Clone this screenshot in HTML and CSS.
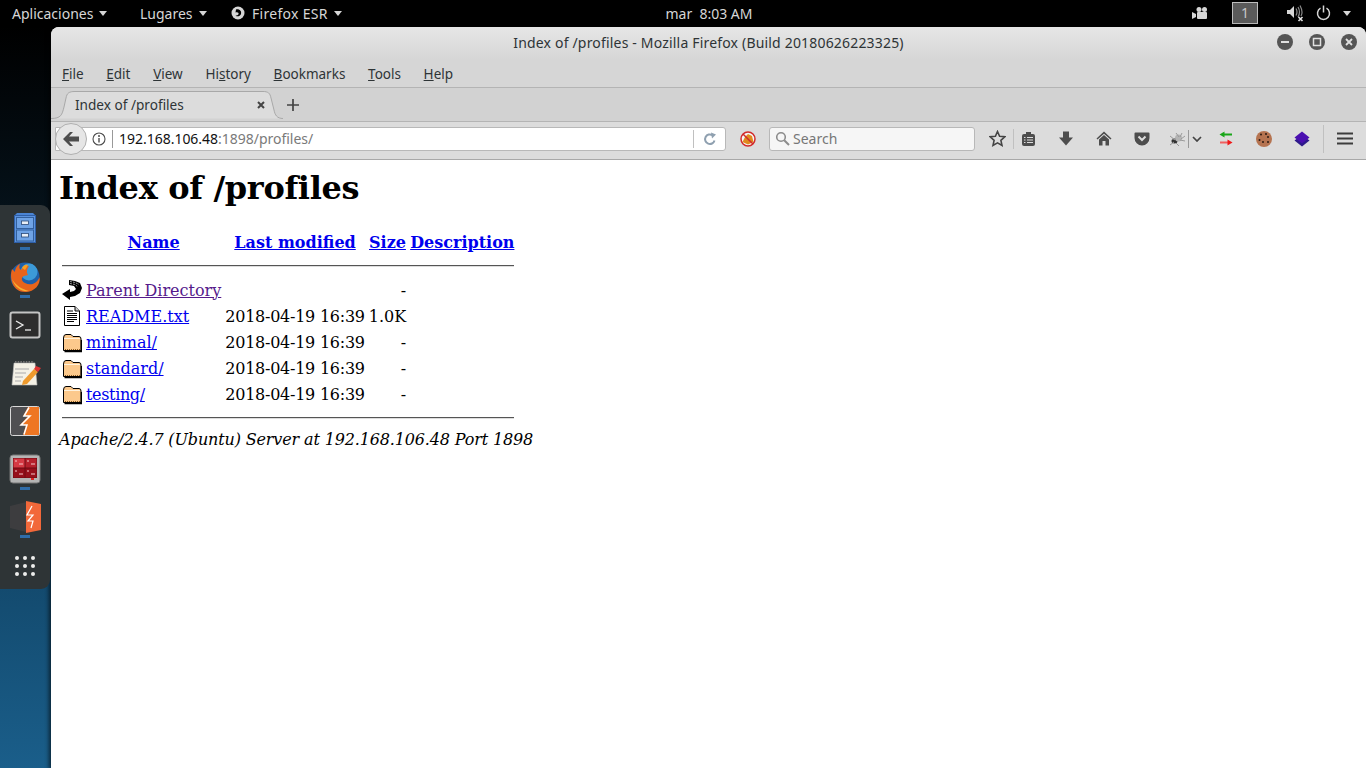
FILE: index.html
```html
<!DOCTYPE html>
<html lang="en">
<head>
    <meta charset="UTF-8">
    <title>Index of /profiles - Mozilla Firefox</title>
    <link rel="stylesheet" href="styles.css">
</head>
<body>
    <div class="topbar">
        <div class="topbar-left">
            <span class="top-item top-apps">Aplicaciones<i class="arrow"></i></span>
            <span class="top-item top-places">Lugares<i class="arrow"></i></span>
            <span class="top-item">
                <svg class="top-ff" width="14" height="14" viewBox="0 0 14 14"><circle cx="7" cy="7" r="6.5" fill="#d6d6d6"/><path d="M5 3.5 C8 2.5 11 5 10 8 C9 10.5 6 11 4.5 9.5 C6.5 10 8 8.5 7.5 7 C7 6 5.5 6 4.5 6.5 Z" fill="#000"/></svg>
                <span class="top-ff-name">Firefox ESR</span><i class="arrow"></i>
            </span>
        </div>
        <div class="clock">mar&nbsp; 8:03 AM</div>
        <div class="topbar-right">
            <svg class="top-cam" width="16" height="14" viewBox="0 0 16 14"><circle cx="7" cy="3.5" r="2.5" fill="#d6d6d6"/><circle cx="12.5" cy="3.5" r="2.5" fill="#d6d6d6"/><rect x="5" y="6" width="10" height="7" rx="1" fill="#d6d6d6"/><path d="M0 6 L4 8 V11 L0 13Z" fill="#d6d6d6"/></svg>
            <span class="workspace">1</span>
            <svg class="top-vol" width="17" height="18" viewBox="0 0 17 18"><path d="M0 6 H3 L7 2 V14 L3 10 H0Z" fill="#d6d6d6"/><path d="M9 4.5 Q11 8 9 11.5 M11 3 Q14 8 11 13 M13 1.5 Q16.5 8 14 12" fill="none" stroke="#8a8a8a" stroke-width="1.2"/><path d="M11.5 13 L15.5 17 M15.5 13 L11.5 17" stroke="#e4e4e4" stroke-width="1.6"/></svg>
            <svg class="top-power" width="15" height="16" viewBox="0 0 15 16"><path d="M4.5 3.2 A6 6 0 1 0 10.5 3.2" fill="none" stroke="#d6d6d6" stroke-width="1.5"/><path d="M7.5 0.5 V7.5" stroke="#d6d6d6" stroke-width="1.5"/></svg>
            <i class="arrow"></i>
        </div>
    </div>

    <div class="desktop">
        <div class="dock">
            <div class="dock-item">
                <svg width="32" height="32" viewBox="0 0 32 32"><path d="M6 2 L8 0 H24 L26 2 V30 H6Z" fill="#4a84d4"/><rect x="5.500" y="2.500" width="21" height="27" fill="#5b93de" stroke="#2f5fa8"/><rect x="7.500" y="4.500" width="17" height="11" fill="#6fa3e6" stroke="#33609e"/><rect x="7.500" y="17" width="17" height="11" fill="#6fa3e6" stroke="#33609e"/><rect x="12.500" y="8" width="7" height="3.500" fill="#e8eef6" stroke="#2b4a78" stroke-width=".8"/><rect x="12.500" y="20.500" width="7" height="3.500" fill="#e8eef6" stroke="#2b4a78" stroke-width=".8"/></svg>
                <i class="dock-dot"></i>
            </div>
            <div class="dock-item">
                <svg width="32" height="32" viewBox="0 0 32 32"><circle cx="16" cy="16" r="14.500" fill="#1f5fa8"/><circle cx="20" cy="11" r="8.500" fill="#3c9ad8"/><path d="M3 8 C0 18 4 31 16 31 C26 31 32 23 30.500 16 C28 23 21 25 16 22 C12 20 12 16 15 15 L19 14 C17 11 18 8 20 5 C16 5 13 7 12 9 C10 8 10 6 11 3 C8 4 6 8 6 11 C5 10 4 9 3 8Z" fill="#e8641b"/><path d="M3 18 C6 27 13 31 20 30 C13 28 7 25 3 18Z" fill="#f9b233"/><path d="M13 7 C14 5 16 3 19 4 L16 9Z" fill="#f9a01e"/></svg>
                <i class="dock-dot"></i>
            </div>
            <div class="dock-item">
                <svg width="32" height="32" viewBox="0 0 32 32"><rect x="1.500" y="3.500" width="29" height="25" rx="2" fill="#2a2a2a" stroke="#c4c4c4" stroke-width="2"/><rect x="3" y="5" width="26" height="22" fill="#2d2d2d"/><path d="M7 12 L14 16 L7 20" fill="none" stroke="#eee" stroke-width="1.300"/><path d="M16 21 H22" stroke="#eee" stroke-width="1.300"/></svg>
            </div>
            <div class="dock-item">
                <svg width="32" height="32" viewBox="0 0 32 32"><path d="M5 6 H26 L28 28 H3Z" fill="#f4f1e6" stroke="#bbb" stroke-width=".6"/><path d="M6 5 H25" stroke="#777" stroke-width="2" stroke-dasharray="1.500 1.200"/><path d="M6 12 H20 M6 16 H17 M6 20 H14 M6 24 H12" stroke="#aaa" stroke-width="1.200"/><path d="M14 24 L25 12 L29 15 L18 27 L13 28Z" fill="#ee9a2d"/><path d="M25 12 L27 9 L32 11 L29 15Z" fill="#d33"/></svg>
            </div>
            <div class="dock-item">
                <svg width="32" height="32" viewBox="0 0 32 32"><rect x="1.500" y="1.500" width="29" height="29" rx="2" fill="#4f4f52" stroke="#d8d8d8"/><path d="M17 2 H30 V30 H14 L17 20 H11 L19 11 H14 L19 2Z" fill="#ee7623"/><path d="M20 2.500 L15 11 H21 L12 20 H18 L15 29.500" fill="none" stroke="#fff" stroke-width="1.500"/></svg>
            </div>
            <div class="dock-item">
                <svg width="32" height="32" viewBox="0 0 32 32"><rect x="1" y="2" width="30" height="28" rx="3" fill="#b4b4b4" stroke="#777"/><rect x="4" y="5" width="24" height="20" fill="#6e0a12"/><rect x="4.500" y="5.500" width="11" height="9" fill="#d63a45"/><rect x="16.500" y="5.500" width="11" height="9" fill="#b5202c"/><rect x="4.500" y="15.500" width="11" height="9" fill="#960f1b"/><rect x="16.500" y="15.500" width="11" height="9" fill="#960f1b"/><path d="M6 8 H8 M10 11 H14 M18 8 H20 M22 11 H26 M6 18 H8 M10 21 H14 M18 18 H20 M22 21 H26" stroke="#f3c9cc"/><rect x="22" y="25" width="3" height="2" fill="#d22"/></svg>
                <i class="dock-dot"></i>
            </div>
            <div class="dock-item">
                <svg width="32" height="32" viewBox="0 0 32 32"><path d="M1 5 L17 1 V31 L1 27Z" fill="#3d3d3f"/><path d="M17 0 L32 3 V29 L17 32Z" fill="#f2683a"/><path d="M23 5 L18 14 H24 L19 20 H24 L22 27" fill="none" stroke="#fff" stroke-width="1.200"/></svg>
                <i class="dock-dot"></i>
            </div>
            <div class="dock-item">
                <svg width="32" height="32" viewBox="0 0 32 32"><g fill="#eeeeec"><circle cx="8" cy="9" r="2"/><circle cx="16" cy="9" r="2"/><circle cx="24" cy="9" r="2"/><circle cx="8" cy="17" r="2"/><circle cx="16" cy="17" r="2"/><circle cx="24" cy="17" r="2"/><circle cx="8" cy="25" r="2"/><circle cx="16" cy="25" r="2"/><circle cx="24" cy="25" r="2"/></g></svg>
            </div>
        </div>

        <div class="window">
            <div class="titlebar">
                <span class="title">Index of /profiles - Mozilla Firefox (Build 20180626223325)</span>
                <div class="win-buttons">
                    <span class="win-btn"><svg width="10" height="10" viewBox="0 0 10 10"><path d="M1 5 H9" stroke="#e0e0e0" stroke-width="2"/></svg></span>
                    <span class="win-btn"><svg width="10" height="10" viewBox="0 0 10 10"><rect x="1.500" y="1.500" width="7" height="7" fill="none" stroke="#e0e0e0" stroke-width="1.500"/></svg></span>
                    <span class="win-btn"><svg width="10" height="10" viewBox="0 0 10 10"><path d="M2 2 L8 8 M8 2 L2 8" stroke="#e0e0e0" stroke-width="1.800"/></svg></span>
                </div>
            </div>
            <div class="menubar">
                <span><u>F</u>ile</span>
                <span><u>E</u>dit</span>
                <span><u>V</u>iew</span>
                <span>Hi<u>s</u>tory</span>
                <span><u>B</u>ookmarks</span>
                <span><u>T</u>ools</span>
                <span><u>H</u>elp</span>
            </div>
            <div class="tabstrip">
                <div class="tab">
                    <svg class="tab-shape" width="232" height="31" viewBox="0 0 232 31"><path d="M0 29.500 C10 29.500 11 26 13 18 L15 9 C16 4 18 2.500 24 2.500 H212 C217 2.500 219 4 220 9 L223 21 C224 26 226 29.500 232 29.500" fill="#dcdcdc" stroke="#a8a8a8"/></svg>
                    <span class="tab-title">Index of /profiles</span>
                    <svg class="tab-close" width="8" height="8" viewBox="0 0 8 8"><path d="M1 1 L7 7 M7 1 L1 7" stroke="#444" stroke-width="2"/></svg>
                </div>
                <svg class="tab-new" width="14" height="14" viewBox="0 0 14 14"><path d="M7 1 V13 M1 7 H13" stroke="#444" stroke-width="1.700"/></svg>
            </div>
            <div class="navbar">
                <div class="urlbar">
                    <span class="back"><svg width="18" height="16" viewBox="0 0 18 16"><path d="M1 8 L8 1 H11 L7 5.500 H17 V10.500 H7 L11 15 H8Z" fill="#4d4d4d"/></svg></span>
                    <svg class="info" width="14" height="14" viewBox="0 0 14 14"><circle cx="7" cy="7" r="6" fill="none" stroke="#4d4d4d" stroke-width="1.100"/><path d="M7 6 V10.500" stroke="#4d4d4d" stroke-width="1.400"/><circle cx="7" cy="4" r="1" fill="#4d4d4d"/></svg>
                    <span class="url"><b>192.168.106.48</b>:1898/profiles/</span>
                    <span class="reload"><svg width="14" height="14" viewBox="0 0 14 14"><path d="M11.500 8.500 A4.800 4.800 0 1 1 9.500 3.200" fill="none" stroke="#8fa0b0" stroke-width="2"/><path d="M8 0.500 L13 2.500 L9 6.500Z" fill="#8fa0b0"/></svg></span>
                </div>
                <svg class="blocker" width="16" height="16" viewBox="0 0 16 16"><circle cx="8" cy="8" r="7" fill="#f6f6f6" stroke="#d22b2b" stroke-width="1.500"/><path d="M2.500 11 L5 6 L8 3 L12 5 L13.500 11 L8 13.500Z" fill="#e08a1e"/><path d="M3 3 L13 13" stroke="#d22b2b" stroke-width="1.500"/></svg>
                <div class="searchbar">
                    <svg width="15" height="15" viewBox="0 0 15 15"><circle cx="6" cy="6" r="4.300" fill="none" stroke="#8c8c8c" stroke-width="1.600"/><path d="M9.200 9.200 L14 14" stroke="#8c8c8c" stroke-width="2"/></svg>
                    <span>Search</span>
                </div>
                <div class="tools">
                    <span class="tool tool-star"><svg width="17" height="17" viewBox="0 0 17 17"><path d="M8.500 1.500 L10.600 6.300 L15.800 6.800 L11.900 10.300 L13 15.400 L8.500 12.800 L4 15.400 L5.100 10.300 L1.200 6.800 L6.400 6.300Z" fill="none" stroke="#444" stroke-width="1.600"/></svg></span>
                    <i class="sep"></i>
                    <span class="tool"><svg width="15" height="16" viewBox="0 0 15 16"><rect x="1" y="3" width="13" height="12" rx="2" fill="#4d4d4d"/><rect x="5" y="1" width="5" height="3" fill="#4d4d4d"/><path d="M3 6.500 H4.500 M6 6.500 H12 M3 9 H4.500 M6 9 H12 M3 11.500 H4.500 M6 11.500 H12" stroke="#dcdcdc"/></svg></span>
                    <span class="tool"><svg width="16" height="15" viewBox="0 0 16 15"><path d="M5 0.500 H11 V6.500 H15 L8 14.500 L1 6.500 H5Z" fill="#4d4d4d"/></svg></span>
                    <span class="tool"><svg width="16" height="15" viewBox="0 0 16 15"><path d="M8 0.500 L15.500 7.500 L14.500 8.500 L8 2.800 L1.500 8.500 L0.500 7.500Z" fill="#4d4d4d"/><path d="M3 8.500 L8 4 L13 8.500 V14.500 H9.500 V10 H6.500 V14.500 H3Z" fill="#4d4d4d"/></svg></span>
                    <span class="tool"><svg width="16" height="14" viewBox="0 0 16 14"><path d="M1.500 0.500 H14.500 A1 1 0 0 1 15.500 1.500 V6 A7.500 7.500 0 0 1 0.500 6 V1.500 A1 1 0 0 1 1.500 0.500Z" fill="#4d4d4d"/><path d="M4.500 4.500 L8 8 L11.500 4.500" fill="none" stroke="#dcdcdc" stroke-width="2"/></svg></span>
                    <span class="tool-split">
                        <svg width="16" height="14" viewBox="0 0 16 14"><ellipse cx="5.500" cy="9" rx="3" ry="2.500" fill="#333"/><circle cx="9.500" cy="6" r="3.500" fill="#b4b4b4"/><path d="M1 4 L6 8 M1 13 L5 10 M7 11 L10 14 M7 1 L10 5 M13 1 L11 5 M16 4 L12 7 M16 9 L11 8 M3 7 H7" stroke="#999"/></svg>
                        <i class="sep-thin"></i>
                        <svg width="10" height="6" viewBox="0 0 10 6"><path d="M1 1 L5 5 L9 1" fill="none" stroke="#444" stroke-width="1.700"/></svg>
                    </span>
                    <span class="tool"><svg width="14" height="15" viewBox="0 0 14 15"><path d="M13 3.500 H5" stroke="#19a619" stroke-width="2"/><path d="M0.500 3.500 L5.500 0.500 V6.500Z" fill="#19a619"/><path d="M1 11.500 H9" stroke="#f06060" stroke-width="2"/><path d="M13.500 11.500 L8.500 8.500 V14.500Z" fill="#f01818"/></svg></span>
                    <span class="tool"><svg width="16" height="16" viewBox="0 0 16 16"><circle cx="8" cy="8" r="8" fill="#b57350"/><g fill="#2b1a12"><circle cx="5" cy="3.500" r="1"/><circle cx="10" cy="3" r="1"/><circle cx="12" cy="6" r="1"/><circle cx="3.500" cy="9" r="1"/><circle cx="7" cy="11" r="1"/><circle cx="12" cy="11" r="1"/></g></svg></span>
                    <span class="tool"><svg width="16" height="16" viewBox="0 0 16 16"><path d="M8 4 L15.500 9.500 L8 15.500 L0.500 9.500Z" fill="#2e1a8a"/><path d="M8 0.500 L15.500 6.500 L8 12.500 L0.500 6.500Z" fill="#4a0fb0"/></svg></span>
                    <i class="sep sep-last"></i>
                    <span class="tool tool-menu"><svg width="16" height="13" viewBox="0 0 16 13"><path d="M0 1.500 H16 M0 6.500 H16 M0 11.500 H16" stroke="#3c3c3c" stroke-width="2.200"/></svg></span>
                </div>
            </div>

            <div class="page">
                <h1>Index of /profiles</h1>
                <table class="listing">
                    <tr class="head">
                        <th></th>
                        <th><a href="#">Name</a></th>
                        <th><a href="#">Last modified</a></th>
                        <th><a href="#">Size</a></th>
                        <th><a href="#">Description</a></th>
                    </tr>
                    <tr><th colspan="5"><hr></th></tr>
                    <tr>
                        <td><svg class="fi" width="20" height="22" viewBox="0 0 20 22"><path d="M7 1 L13 2 L18 4 L20 9 L18 14 L13 17 L8 18 V21 L0 15 L8 10 V13 L12 12 L14 10 L12 7 L7 6Z" fill="#000"/><path d="M8 2.500 L13 3.500 L17 5.500 M8 4.500 L13 5.500 L16 8" fill="none" stroke="#999" stroke-dasharray="2 1"/></svg></td>
                        <td><a class="visited" href="#">Parent Directory</a></td>
                        <td></td>
                        <td class="size">-</td>
                        <td></td>
                    </tr>
                    <tr>
                        <td><svg class="fi" width="20" height="22" viewBox="0 0 20 22"><path d="M2.500 1.500 H13 L17.500 6 V20.500 H2.500Z" fill="#fff" stroke="#000"/><path d="M13 1.500 V6 H17.500" fill="#ccc" stroke="#000"/><path d="M5 6 H11 M5 8.500 H15 M5 10.500 H15 M5 12.500 H15 M5 14.500 H15 M5 16.500 H12" stroke="#000" stroke-width="1.200"/></svg></td>
                        <td><a href="#">README.txt</a></td>
                        <td class="date">2018-04-19 16:39</td>
                        <td class="size">1.0K</td>
                        <td></td>
                    </tr>
                    <tr>
                        <td><svg class="fi" width="20" height="22" viewBox="0 0 20 22"><use href="#folder"/></svg></td>
                        <td><a href="#">minimal/</a></td>
                        <td class="date">2018-04-19 16:39</td>
                        <td class="size">-</td>
                        <td></td>
                    </tr>
                    <tr>
                        <td><svg class="fi" width="20" height="22" viewBox="0 0 20 22"><use href="#folder"/></svg></td>
                        <td><a href="#">standard/</a></td>
                        <td class="date">2018-04-19 16:39</td>
                        <td class="size">-</td>
                        <td></td>
                    </tr>
                    <tr>
                        <td><svg class="fi" width="20" height="22" viewBox="0 0 20 22"><use href="#folder"/></svg></td>
                        <td><a class="tight" href="#">testing/</a></td>
                        <td class="date">2018-04-19 16:39</td>
                        <td class="size">-</td>
                        <td></td>
                    </tr>
                    <tr><th colspan="5"><hr></th></tr>
                </table>
                <address>Apache/2.4.7 (Ubuntu) Server at 192.168.106.48 Port 1898</address>
            </div>
        </div>
    </div>

    <svg class="defs" width="0" height="0">
        <defs>
            <g id="folder">
                <path d="M1.500 7 Q1.500 3.500 4 3.500 H9 L11 5.500 H17 Q19 5.500 19 8 V19.500 H1.500Z" fill="#fcc98c" stroke="#000"/>
                <path d="M2 7.500 H18" stroke="#fff2dc"/>
                <path d="M2.500 20.500 H19.500 V9" fill="none" stroke="#000" stroke-width="1.500"/>
                <path d="M3 18.500 H18" stroke="#8a5a20" stroke-dasharray="1 1"/>
            </g>
        </defs>
    </svg>
</body>
</html>
```

FILE: styles.css
```css
* {
    box-sizing: border-box;
}

html, body {
    height: 100%;
}

body {
    margin: 0;
    display: flex;
    flex-direction: column;
    overflow: hidden;
    background: #000;
    font-family: "Noto Sans", sans-serif;
    font-size: 14px;
    color: #2e3436;
}

.defs {
    position: absolute;
}

/* gnome top bar */
.topbar {
    height: 26px;
    flex: none;
    display: flex;
    align-items: center;
    position: relative;
    background: #000;
    color: #d6d6d6;
}

.topbar-left {
    display: flex;
    align-items: center;
    padding-left: 12px;
}

.top-item {
    display: flex;
    align-items: center;
}

.top-apps {
    width: 128px;
}

.top-places {
    width: 91px;
}

.top-ff {
    margin-right: 7px;
}

.top-ff-name {
    letter-spacing: 0.3px;
}

.arrow {
    display: inline-block;
    width: 0;
    height: 0;
    margin-left: 6px;
    border-left: 4.5px solid transparent;
    border-right: 4.5px solid transparent;
    border-top: 5px solid #d6d6d6;
}

.clock {
    position: absolute;
    left: 665px;
    width: 88px;
    text-align: center;
    white-space: nowrap;
}

.topbar-right {
    margin-left: auto;
    display: flex;
    align-items: center;
    padding-right: 15px;
}

.top-cam {
    margin-right: 24px;
}

.workspace {
    width: 26px;
    height: 22px;
    margin-right: 29px;
    border: 1px solid #bdbdbd;
    background: #5a5a5a;
    color: #c8c8c8;
    text-align: center;
    line-height: 20px;
}

.top-vol {
    margin-right: 12px;
}

.top-power {
    margin-right: 6px;
}

/* desktop */
.desktop {
    flex: 1;
    position: relative;
    padding-left: 51px;
    min-height: 0;
    background: linear-gradient(180deg, #000 0%, #06151f 30%, #134a6e 75%, #1a5e8a 100%);
}

.dock {
    position: absolute;
    z-index: 1;
    left: 0;
    top: 179px;
    width: 50px;
    height: 384px;
    background: #2e3436;
    border-radius: 0 9px 9px 0;
}

.dock-item {
    height: 48px;
    padding-top: 8px;
    display: flex;
    flex-direction: column;
    align-items: center;
}

.dock-item svg {
    flex: none;
}

.dock-dot {
    width: 10px;
    height: 3px;
    margin-top: 2px;
    background: #2f6ca8;
}

/* firefox window */
.window {
    height: 100%;
    display: flex;
    flex-direction: column;
    margin-top: 1px;
    background: #fff;
    border-radius: 8px 8px 0 0;
    overflow: hidden;
    box-shadow: -2px 0 4px rgba(0, 0, 0, 0.6);
}

.titlebar {
    height: 33px;
    flex: none;
    display: flex;
    align-items: center;
    justify-content: center;
    position: relative;
    padding-bottom: 2px;
    background: linear-gradient(180deg, #e6e6e6, #d6d6d6);
}

.title {
    letter-spacing: 0.18px;
    color: #2e3436;
}

.win-buttons {
    position: absolute;
    right: 9px;
    top: 7px;
    display: flex;
    gap: 16px;
}

.win-btn {
    width: 16px;
    height: 16px;
    border-radius: 50%;
    background: #555;
    display: flex;
    align-items: center;
    justify-content: center;
}

.menubar {
    height: 28px;
    flex: none;
    display: flex;
    align-items: center;
    gap: 22.7px;
    padding-left: 11px;
    font-size: 13.5px;
    background: #d6d6d6;
    border-bottom: 1px solid #b4b4b4;
}

.tabstrip {
    height: 33px;
    flex: none;
    display: flex;
    align-items: center;
    background: #d2d2d2;
}

.tab {
    width: 232px;
    height: 31px;
    position: relative;
    display: flex;
    align-items: center;
    padding: 0 18px 0 24px;
    font-size: 13.6px;
}

.tab-shape {
    position: absolute;
    left: 0;
    top: 0;
}

.tab-title, .tab-close {
    position: relative;
}

.tab-title {
    flex: 1;
}

.tab-new {
    margin-left: 3px;
}

.navbar {
    height: 39px;
    flex: none;
    display: flex;
    align-items: center;
    padding-bottom: 4px;
    background: #dcdcdc;
    border-top: 1px solid #b4b4b4;
    border-bottom: 1px solid #a8a8a8;
}

.urlbar {
    width: 671px;
    height: 24px;
    margin-left: 4px;
    display: flex;
    align-items: center;
    background: #fff;
    border: 1px solid #b8b8b8;
    border-radius: 0 3px 3px 0;
    position: relative;
    padding-left: 36px;
}

.back {
    position: absolute;
    left: -1px;
    top: -5px;
    width: 32px;
    height: 32px;
    border-radius: 50%;
    background: #e6e6e6;
    border: 1px solid #b0b0b0;
    display: flex;
    align-items: center;
    justify-content: center;
}

.url {
    flex: 1;
    margin-left: 6px;
    padding-left: 6px;
    border-left: 1px solid #999;
    color: #7a7a7a;
    line-height: 18px;
    letter-spacing: -0.02px;
}

.url b {
    font-weight: 400;
    color: #111;
}

.reload {
    width: 32px;
    height: 18px;
    border-left: 1px solid #c0c0c0;
    display: flex;
    align-items: center;
    justify-content: center;
}

.blocker {
    margin-left: 14px;
}

.searchbar {
    width: 206px;
    height: 24px;
    margin-left: 13px;
    display: flex;
    align-items: center;
    gap: 3px;
    padding-left: 5px;
    background: #f6f6f6;
    border: 1px solid #b8b8b8;
    border-radius: 3px;
    color: #777;
}

.tools {
    display: flex;
    align-items: center;
    height: 100%;
}

.tool {
    width: 38px;
    display: flex;
    align-items: center;
    justify-content: center;
}

.tool-star {
    width: 44px;
}

.sep {
    width: 1px;
    height: 20px;
    margin: 0 -5px 0 -6px;
    background: #c0c0c0;
}

.sep-last {
    height: 28px;
    margin: 0 2px 0 2px;
}

.tool-split {
    width: 44px;
    margin-left: 2px;
    display: flex;
    align-items: center;
    justify-content: center;
    gap: 3px;
}

.sep-thin {
    width: 1px;
    height: 18px;
    background: #999;
}

.tool-menu {
    width: 38px;
}

/* directory listing */
.page {
    flex: 1;
    padding: 8px;
    background: #fff;
    color: #000;
    font-family: "DejaVu Serif", serif;
    font-size: 16px;
}

.page h1 {
    margin: 0 0 23px;
    padding-top: 1px;
    font-size: 32px;
    line-height: 38px;
    letter-spacing: -0.33px;
}

.listing {
    border-spacing: 2px;
}

.listing th, .listing td {
    padding: 1px;
    line-height: 19px;
    text-align: left;
    white-space: nowrap;
}

.listing th {
    text-align: center;
}

.listing .head th {
    padding-bottom: 2px;
}

.listing td.date {
    letter-spacing: -0.25px;
}

.listing td.size {
    text-align: right;
}

.listing a {
    color: #0000ee;
}

.listing a.visited {
    color: #551a8b;
}

.listing a.tight {
    letter-spacing: -0.35px;
}

.listing hr {
    margin: 8px 0;
    border: none;
    border-top: 1px solid #555;
    border-bottom: 1px solid #ddd;
}

.fi {
    display: block;
}

address {
    font-style: italic;
    letter-spacing: -0.145px;
}
```
